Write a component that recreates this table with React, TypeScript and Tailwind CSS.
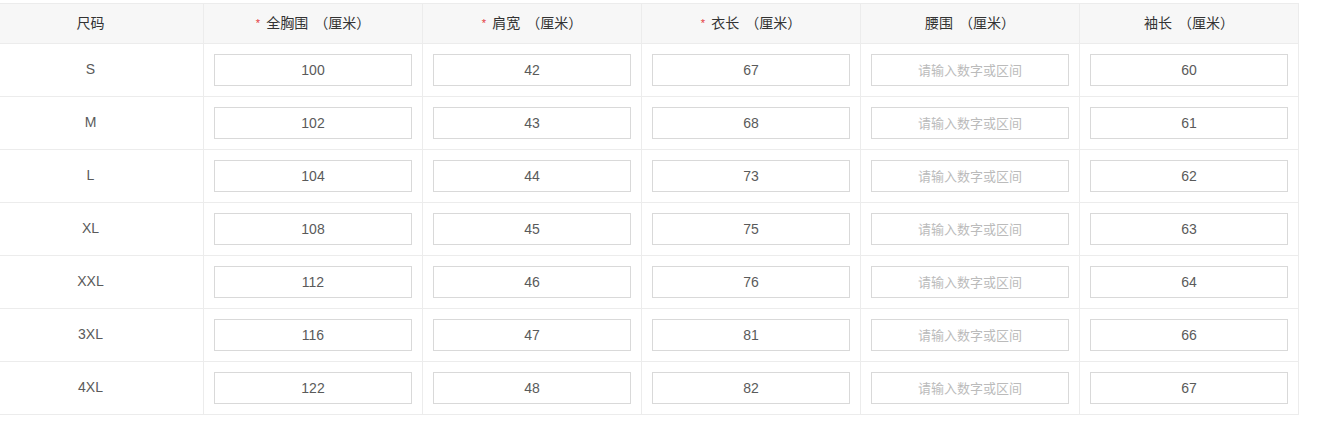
import React from "react";

const columns = [
  { label: "全胸围", required: true },
  { label: "肩宽", required: true },
  { label: "衣长", required: true },
  { label: "腰围", required: false },
  { label: "袖长", required: false },
];

const rows: { size: string; values: (string | null)[] }[] = [
  { size: "S", values: ["100", "42", "67", null, "60"] },
  { size: "M", values: ["102", "43", "68", null, "61"] },
  { size: "L", values: ["104", "44", "73", null, "62"] },
  { size: "XL", values: ["108", "45", "75", null, "63"] },
  { size: "XXL", values: ["112", "46", "76", null, "64"] },
  { size: "3XL", values: ["116", "47", "81", null, "66"] },
  { size: "4XL", values: ["122", "48", "82", null, "67"] },
];

const font = {
  fontFamily: '"Liberation Sans", "Noto Sans CJK SC", sans-serif',
};

export default function App() {
  return (
    <div className="w-[1333px] h-[435px] bg-white pt-[3px]" style={font}>
      <div className="grid grid-cols-[204px_repeat(5,219px)] border-t border-[#ececec] w-[1299px]">
        <div className="h-10 bg-[#f7f7f7] border-r border-b border-[#ececec] flex items-center justify-center pr-[22px] pb-[1px] text-[14px] text-[#333]">
          尺码
        </div>
        {columns.map((c) => (
          <div
            key={c.label}
            className="h-10 bg-[#f7f7f7] border-r border-b border-[#ececec] flex items-center justify-center pb-[1px] text-[14px] text-[#333]"
          >
            {c.required ? (
              <span className="text-[#e4393c] text-[11px] mr-[6px]">*</span>
            ) : null}
            <span>{c.label}</span>
            <span className="ml-[6px]">（厘米）</span>
          </div>
        ))}

        {rows.map((r) => (
          <React.Fragment key={r.size}>
            <div className="h-[53px] border-r border-b border-[#ececec] flex items-center justify-center pr-[22px] pb-[2px] text-[14px] text-[#5a5a5a]">
              {r.size}
            </div>
            {r.values.map((v, i) => (
              <div
                key={i}
                className="h-[53px] border-r border-b border-[#ececec] px-[10px] py-[10px]"
              >
                <input
                  readOnly
                  defaultValue={v ?? ""}
                  placeholder="请输入数字或区间"
                  className="w-full h-8 border border-[#d9d9d9] text-center text-[14px] text-[#5a5a5a] placeholder:text-[#bbb] placeholder:text-[13px] outline-none"
                  style={font}
                />
              </div>
            ))}
          </React.Fragment>
        ))}
      </div>
    </div>
  );
}
